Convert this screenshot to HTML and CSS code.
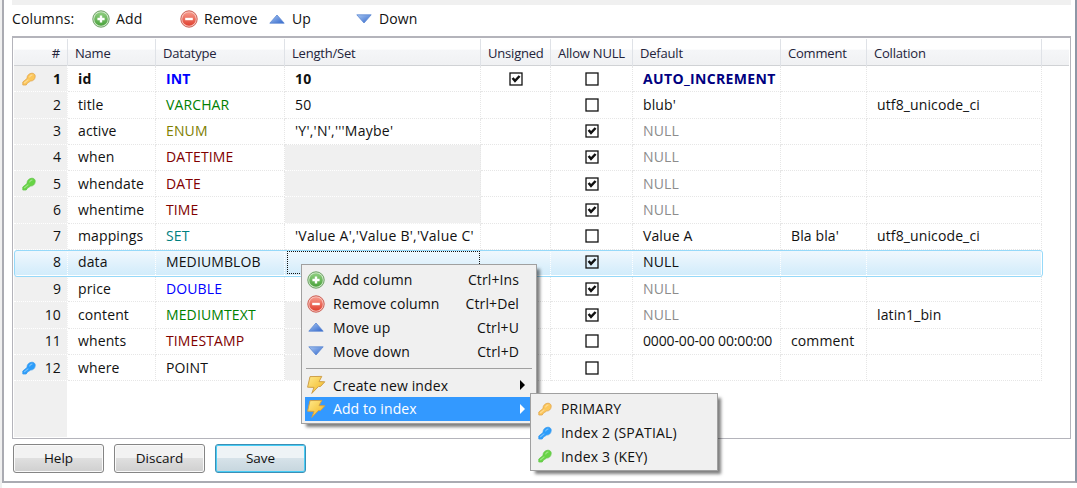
FILE: index.html
```html
<!DOCTYPE html>
<html lang="en">

<head>
    <meta charset="UTF-8">
    <meta name="viewport" content="width=device-width, initial-scale=1.0">
    <title>Table editor</title>
    <link rel="stylesheet" href="styles.css">
</head>

<body>
    <!-- shared icons -->
    <svg class="sprite" width="0" height="0">
        <defs>
            <linearGradient id="g-green" x1="0" y1="0" x2="0" y2="1">
                <stop offset="0" stop-color="#8fcf80" />
                <stop offset="1" stop-color="#4aa23c" />
            </linearGradient>
            <linearGradient id="g-red" x1="0" y1="0" x2="0" y2="1">
                <stop offset="0" stop-color="#f79a8c" />
                <stop offset="1" stop-color="#e0402f" />
            </linearGradient>
            <linearGradient id="g-blue" x1="0" y1="0" x2="1" y2="1">
                <stop offset="0" stop-color="#a9c8f3" />
                <stop offset="1" stop-color="#3166cb" />
            </linearGradient>
            <linearGradient id="g-bolt" x1="0" y1="0" x2="1" y2="1">
                <stop offset="0" stop-color="#ffe98c" />
                <stop offset="1" stop-color="#f0b41c" />
            </linearGradient>
        </defs>
        <symbol id="add" viewBox="0 0 18 18">
            <circle cx="9" cy="9" r="8.2" fill="#d3e8ce" stroke="#6ba162" stroke-width="1" />
            <circle cx="9" cy="9" r="6.8" fill="url(#g-green)" />
            <path d="M9 5.4v7.2M5.4 9h7.2" stroke="#fff" stroke-width="2.4" />
        </symbol>
        <symbol id="remove" viewBox="0 0 18 18">
            <circle cx="9" cy="9" r="8.2" fill="#f8c5be" stroke="#cb5e53" stroke-width="1" />
            <circle cx="9" cy="9" r="6.8" fill="url(#g-red)" />
            <path d="M5.2 9h7.6" stroke="#fff" stroke-width="2.4" />
        </symbol>
        <symbol id="up" viewBox="0 0 18 18">
            <path d="M9 5L16.2 13.2H1.8z" fill="url(#g-blue)" stroke="#5a86d2" stroke-width=".8" />
        </symbol>
        <symbol id="down" viewBox="0 0 18 18">
            <path d="M9 13L16.2 4.8H1.8z" fill="url(#g-blue)" stroke="#5a86d2" stroke-width=".8" />
        </symbol>
        <symbol id="bolt" viewBox="0 0 20 20">
            <path d="M4 1.6L15.8 1.4L13 6.6L18.8 6.8L14.6 11.4L12.4 11.6L5.8 18.4L8 12.4L1.6 12.2z" fill="url(#g-bolt)" stroke="#cfa04a" stroke-width="1" />
        </symbol>
        <symbol id="key" viewBox="0 0 14 14">
            <path d="M.8 13V10L5 6.6C4.8 3.4 7.4 1.2 10 1.2C12 1.2 13.4 2.6 13.2 4.6C13 7.4 11 9.2 8.6 9L7.2 10L6 10.6L5.2 11.4L4.2 13z" stroke-width=".8" />
            <path d="M2.2 11L6.4 7.6M7.4 5.4Q8.2 3.2 10.4 2.8" fill="none" stroke="#fff" stroke-opacity=".35" stroke-width="1.2" />
        </symbol>
    </svg>

    <div class="panel">
        <div class="strip"></div>
        <div class="toolbar">
            <span class="tool tool-label">Columns:</span>
            <span class="tool tool-add"><svg class="icon"><use href="#add" /></svg>Add</span>
            <span class="tool tool-remove"><svg class="icon"><use href="#remove" /></svg>Remove</span>
            <span class="tool tool-up"><svg class="icon"><use href="#up" /></svg>Up</span>
            <span class="tool tool-down"><svg class="icon"><use href="#down" /></svg>Down</span>
        </div>

        <div class="grid">
            <div class="head">
                <span class="num">#</span>
                <span>Name</span>
                <span>Datatype</span>
                <span>Length/Set</span>
                <span>Unsigned</span>
                <span>Allow NULL</span>
                <span>Default</span>
                <span>Comment</span>
                <span>Collation</span>
                <span></span>
            </div>
            <div class="rows"></div>
            <div class="filler"></div>
        </div>

        <div class="buttons">
            <button class="btn">Help</button>
            <button class="btn">Discard</button>
            <button class="btn default">Save</button>
        </div>
    </div>

    <div class="menu context">
        <div class="item"><svg class="icon"><use href="#add" /></svg><span>Add column</span><kbd>Ctrl+Ins</kbd></div>
        <div class="item"><svg class="icon"><use href="#remove" /></svg><span>Remove column</span><kbd>Ctrl+Del</kbd></div>
        <div class="item"><svg class="icon"><use href="#up" /></svg><span>Move up</span><kbd>Ctrl+U</kbd></div>
        <div class="item"><svg class="icon"><use href="#down" /></svg><span>Move down</span><kbd>Ctrl+D</kbd></div>
        <div class="separator"></div>
        <div class="item"><svg class="icon bolt"><use href="#bolt" /></svg><span>Create new index</span><i class="arrow"></i></div>
        <div class="item active"><svg class="icon bolt"><use href="#bolt" /></svg><span>Add to index</span><i class="arrow"></i></div>
    </div>

    <div class="menu submenu">
        <div class="item"><svg class="key gold"><use href="#key" /></svg><span>PRIMARY</span></div>
        <div class="item"><svg class="key blue"><use href="#key" /></svg><span>Index 2 (SPATIAL)</span></div>
        <div class="item"><svg class="key green"><use href="#key" /></svg><span>Index 3 (KEY)</span></div>
    </div>

    <script>
        // key, name, type, type class, length (null = not editable), unsigned, allow null, default, comment, collation
        let columns = [
            ["gold", "id", "INT", "int", "10", true, false, "AUTO_INCREMENT", "", ""],
            ["", "title", "VARCHAR", "text", "50", null, false, "blub'", "", "utf8_unicode_ci"],
            ["", "active", "ENUM", "enum", "'Y','N','''Maybe'", null, true, "NULL", "", ""],
            ["", "when", "DATETIME", "date", null, null, true, "NULL", "", ""],
            ["green", "whendate", "DATE", "date", null, null, true, "NULL", "", ""],
            ["", "whentime", "TIME", "date", null, null, true, "NULL", "", ""],
            ["", "mappings", "SET", "set", "'Value A','Value B','Value C'", null, false, "Value A", "Bla bla'", "utf8_unicode_ci"],
            ["", "data", "MEDIUMBLOB", "", "", null, true, "NULL", "", ""],
            ["", "price", "DOUBLE", "int", "", null, true, "NULL", "", ""],
            ["", "content", "MEDIUMTEXT", "text", null, null, true, "NULL", "", "latin1_bin"],
            ["", "whents", "TIMESTAMP", "date", null, null, false, "0000-00-00 00:00:00", "comment", ""],
            ["blue", "where", "POINT", "", null, null, false, "", "", ""]
        ];

        function check(value) {
            if (value === null) {
                return "";
            }
            let mark = value ? '<path d="M3.6 6L6 8.8L10.6 4" />' : "";
            return '<svg class="check" viewBox="0 0 14 14"><rect x="1" y="1" width="12" height="12" />' + mark + '</svg>';
        }

        let html = "";
        columns.forEach((c, index) => {
            let row = "row";
            if (index == 0) row += " primary";
            if (index == 7) row += " selected";
            let key = c[0] ? '<svg class="key ' + c[0] + '"><use href="#key" /></svg>' : "";
            let def = c[7] == "NULL" ? "null" : "";
            html += '<div class="' + row + '">' +
                '<span class="num">' + key + (index + 1) + '</span>' +
                '<span>' + c[1] + '</span>' +
                '<span class="type ' + c[3] + '">' + c[2] + '</span>' +
                '<span class="length' + (c[4] === null ? " off" : "") + '">' + (c[4] || "") + '</span>' +
                '<span class="center">' + check(c[5]) + '</span>' +
                '<span class="center">' + check(c[6]) + '</span>' +
                '<span class="value ' + def + (index == 10 ? " stamp" : "") + '">' + c[7] + '</span>' +
                '<span>' + c[8] + '</span>' +
                '<span>' + c[9] + '</span>' +
                '</div>';
        });
        document.getElementsByClassName('rows')[0].innerHTML = html;
    </script>
</body>

</html>
```

FILE: styles.css
```css
* {
    margin: 0;
    padding: 0;
    box-sizing: border-box;
}

body {
    width: 1077px;
    height: 488px;
    overflow: hidden;
    background-color: #fff;
    font-family: "Open Sans", "Noto Sans", sans-serif;
    font-size: 14px;
    letter-spacing: 0.12px;
    color: #111;
    border-left: 2px solid #f0f0f0;
}

.sprite {
    position: absolute;
}

.panel {
    width: 1075px;
    height: 483px;
    padding: 0 4px 0 8px;
    border: 2px solid #aaabb2;
    border-top: none;
    border-right-color: #8e97a6;
}

.strip {
    height: 5px;
    background-color: #f0f0f0;
}

.toolbar {
    display: flex;
    align-items: center;
    height: 31px;
    padding-bottom: 4px;
}

.tool {
    display: flex;
    align-items: center;
    gap: 6px;
    white-space: nowrap;
}

.tool-label {
    width: 80px;
}

.tool-add {
    width: 88px;
}

.tool-remove {
    width: 88px;
}

.tool-up {
    width: 87px;
}

.icon {
    width: 18px;
    height: 18px;
    flex: none;
}

.grid {
    display: flex;
    flex-direction: column;
    height: 403px;
    padding: 1px;
    border: 1px solid #b4b4bb;
    border-top: 2px solid #b4b4bb;
}

.head,
.row {
    display: grid;
    grid-template-columns: 54px 88px 129px 196px 70px 82px 148px 86px 175px 1fr;
}

.head {
    height: 27px;
    border-bottom: 1px solid #d0d2d5;
    background: linear-gradient(#fff 0 40%, #f5f6f8 41%, #f0f1f3);
    font-size: 13px;
    letter-spacing: -0.2px;
    color: #23233a;
}

.head span {
    padding-left: 7px;
    border-right: 1px solid #dfe2e7;
    line-height: 28px;
    white-space: nowrap;
}

.head span:last-child {
    border-right: none;
}

.head .num {
    padding: 0 7px 0 0;
    text-align: right;
}

.rows {
    display: grid;
    grid-template-rows: repeat(12, 26.27px);
}

.row span {
    display: flex;
    align-items: center;
    min-width: 0;
    padding: 0 0 1px 10px;
    border-right: 1px dotted #e6e6e6;
    border-bottom: 1px dotted #e6e6e6;
    white-space: nowrap;
}

.row .num {
    justify-content: flex-end;
    padding-right: 6px;
    background-color: #f0f0f0;
    border-color: #fff;
}

.row .num .key {
    margin-top: 2px;
    margin-right: auto;
    margin-left: -2px;
}

.row .center {
    justify-content: center;
    padding: 0;
}

.row .off {
    background-color: #f0f0f0;
    border-bottom-color: #fff;
}

.row .length {
    letter-spacing: 0.25px;
}

.row .stamp {
    letter-spacing: -0.15px;
}

.row .int {
    color: #0000ff;
}

.row .text {
    color: #008000;
}

.row .enum {
    color: #808000;
}

.row .date {
    color: #800000;
}

.row .set {
    color: #008080;
}

.row .null {
    color: #8c8c8c;
}

.primary {
    font-weight: bold;
}

.primary .value {
    color: #000080;
    letter-spacing: 0.35px;
}

.selected {
    height: 25px;
    border-radius: 3px;
    background: linear-gradient(#f1f8fd, #d2ecfb);
    background-size: 1027px 100%;
    background-repeat: no-repeat;
    position: relative;
}

.selected::after {
    content: "";
    position: absolute;
    left: 0;
    top: 0;
    width: 1027px;
    height: 100%;
    border: 1px solid #96d9f9;
    border-radius: 3px;
}

.row.selected span {
    background: none;
    border-color: #fff;
    border-bottom: none;
}

.row.selected .null {
    color: #111;
}

.row.selected .length {
    margin: 1px 1px 1px 2px;
    border: 1px dotted #111;
}

.check {
    width: 14px;
    height: 14px;
    fill: none;
    stroke: #111;
    stroke-width: 1.3;
}

.check path {
    stroke-width: 2.5;
}

.key {
    width: 14px;
    height: 14px;
    flex: none;
}

.gold {
    fill: #fcc75a;
    stroke: #dfa44c;
}

.green {
    fill: #67d445;
    stroke: #66c64c;
}

.blue {
    fill: #2b9dfb;
    stroke: #3a9bee;
}

.filler {
    flex: 1;
    width: 53px;
    background-color: #f0f0f0;
}

.buttons {
    display: flex;
    gap: 10px;
    padding: 5px 0 0 1px;
}

.btn {
    width: 91px;
    height: 29px;
    padding-bottom: 1px;
    border: 1px solid #858585;
    border-radius: 3px;
    box-shadow: inset 0 0 0 1px #fafafa;
    background: linear-gradient(#f2f2f2 0 48%, #dfdfdf 50%, #cfcfcf);
    font-family: inherit;
    font-size: 13.5px;
    color: #111;
}

.default {
    border-color: #3c8fb5;
    box-shadow: inset 0 0 0 1px #48cdf6;
    background: linear-gradient(#eef3f6 0 48%, #d6e2e9 50%, #c6d6de);
}

.menu {
    position: absolute;
    border: 1px solid #a0a0a0;
    background-color: #f0f0f0;
    box-shadow: 4px 4px 3px -1px rgba(0, 0, 0, 0.5);
}

.context {
    left: 301px;
    top: 264px;
    width: 236px;
    height: 160px;
    padding: 3px;
    letter-spacing: 0.1px;
}

.submenu {
    left: 530px;
    top: 393px;
    width: 188px;
    height: 78px;
    padding: 3px;
    letter-spacing: 0.2px;
}

.item {
    display: flex;
    align-items: center;
    height: 23.8px;
    padding: 0 14px 0 2px;
    white-space: nowrap;
}

.item .icon {
    margin-right: 8px;
}

.item .bolt {
    width: 20px;
    height: 20px;
    margin: 0 7px 0 -1px;
}

.item kbd {
    margin-left: auto;
    font-family: inherit;
}

.item .arrow {
    margin-left: auto;
    margin-right: -6px;
    border: 5px solid transparent;
    border-left-color: #000;
    border-right: none;
}

.item.active {
    background-color: #3399ff;
    color: #fff;
}

.active .arrow {
    border-left-color: #fff;
}

.separator {
    height: 1px;
    margin: 5px 1px 4px;
    background-color: #a0a0a0;
}

.submenu .key {
    margin: 0 9px 0 2px;
}
```
